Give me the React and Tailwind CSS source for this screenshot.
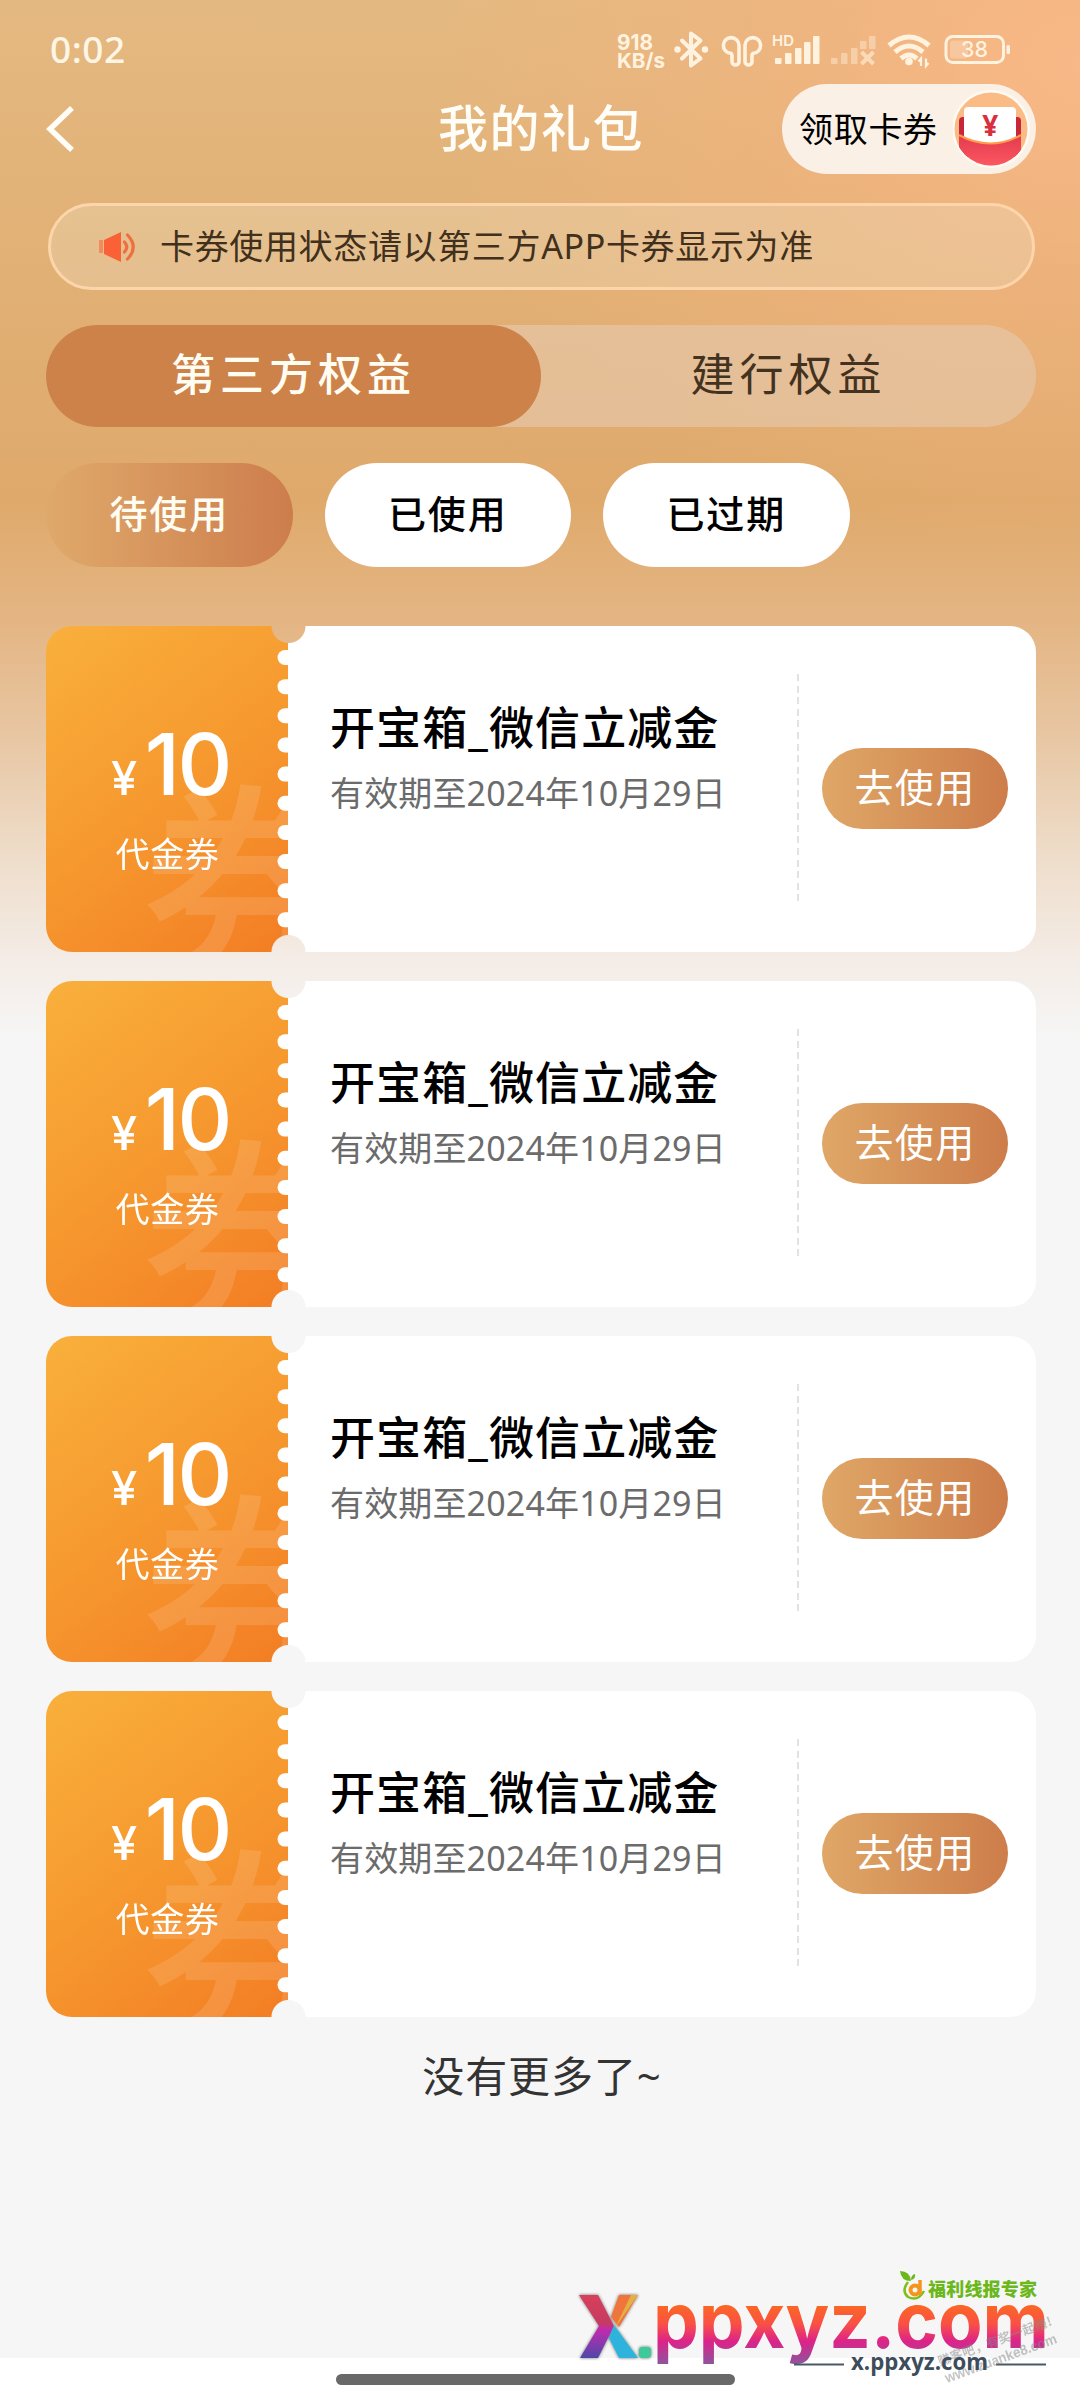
import React, { useState } from 'react'

const coupons = [
  { id: 1, amount: 10, type: '代金券', title: '开宝箱_微信立减金', expire: '有效期至2024年10月29日' },
  { id: 2, amount: 10, type: '代金券', title: '开宝箱_微信立减金', expire: '有效期至2024年10月29日' },
  { id: 3, amount: 10, type: '代金券', title: '开宝箱_微信立减金', expire: '有效期至2024年10月29日' },
  { id: 4, amount: 10, type: '代金券', title: '开宝箱_微信立减金', expire: '有效期至2024年10月29日' },
]

const tabs = ['第三方权益', '建行权益']
const filters = ['待使用', '已使用', '已过期']

const StatusBar = () => (
  <div className="h-[76px] pt-6 pl-[50px] pr-[69px] flex justify-between text-[#fff6e6]">
    <div className="text-[37px] leading-[50px] font-medium tracking-[0.5px]">0:02</div>
    <svg className="w-[395px] h-[52px] shrink-0" viewBox="616 24 395 52" fill="none">
      <g fill="#fff3e0" fontFamily="Inter" fontWeight="700">
        <text x="617" y="49.500" fontSize="22" textLength="36" lengthAdjust="spacingAndGlyphs">918</text>
        <text x="617" y="67.500" fontSize="20.500" textLength="48" lengthAdjust="spacingAndGlyphs">KB/s</text>
        <text x="772" y="46" fontSize="15" fontWeight="600" textLength="22" lengthAdjust="spacingAndGlyphs">HD</text>
      </g>
      {/* bluetooth */}
      <path d="M682 40.500l18.500 18-9.500 7V33.500l9.500 7-18.500 18" stroke="#fff3e0" strokeWidth="4" strokeLinejoin="round" strokeLinecap="round" />
      <circle cx="677.500" cy="49.500" r="3.200" fill="#fff3e0" />
      <circle cx="705" cy="49.500" r="3.200" fill="#fff3e0" />
      {/* earbuds */}
      <path d="M739 45a7.800 7.800 0 1 0-8.500 8.200q1.500 .3 1.500 2.800v5.500a3.500 3.500 0 0 0 7 0zM745 45a7.800 7.800 0 1 1 8.500 8.200q-1.500 .3-1.500 2.800v5.500a3.500 3.500 0 0 1-7 0z" stroke="#fff3e0" strokeWidth="3.600" />
      {/* signals */}
      <g fill="#fff3e0">
        <rect x="775" y="58" width="6.500" height="6" rx="1" />
        <rect x="785" y="53" width="6.500" height="11" rx="1" />
        <rect x="795" y="48" width="6.500" height="16" rx="1" />
        <rect x="804" y="42" width="6.500" height="22" rx="1" />
        <rect x="813" y="36" width="6.500" height="28" rx="1" />
      </g>
      <g fill="#fff3e0" opacity=".42">
        <rect x="831" y="58" width="6.500" height="6" rx="1" />
        <rect x="841" y="53" width="6.500" height="11" rx="1" />
        <rect x="851" y="48" width="6.500" height="16" rx="1" />
        <rect x="860" y="41" width="6.500" height="8" rx="1" />
        <rect x="869" y="36" width="6.500" height="13" rx="1" />
      </g>
      <path d="M861.500 52l12 12M873.500 52l-12 12" stroke="#fff3e0" strokeWidth="4" opacity=".6" />
      {/* wifi */}
      <g stroke="#fff3e0" strokeWidth="5">
        <path d="M889 45.500q20-17 40 0" />
        <path d="M895 52q14-12 28 0" />
        <path d="M901 58.500q8-7 16 0" />
      </g>
      <circle cx="909" cy="61.500" r="3.800" fill="#fff3e0" />
      <path d="M921 66v-7.500l-2.500 3M926 58.500v7.500l2.500-3" stroke="#fff3e0" strokeWidth="2.200" />
      {/* battery */}
      <rect x="946" y="36.500" width="57.500" height="26" rx="7" stroke="#fff3e0" strokeWidth="3" />
      <rect x="950" y="40.500" width="18" height="18" rx="3" fill="#fff3e0" opacity=".3" />
      <rect x="1006.500" y="45" width="3.500" height="9" rx="1.500" fill="#fff3e0" />
      <text x="961" y="57" fontSize="22" fontFamily="Inter" fontWeight="500" fill="#fff3e0" textLength="27" lengthAdjust="spacingAndGlyphs">38</text>
    </svg>
  </div>
)

const EnvelopeIcon = () => (
  <svg className="w-[78px] h-[78px]" viewBox="0 0 78 78">
    <defs>
      <clipPath id="envelope-clip"><circle cx="38" cy="39" r="36.500" /></clipPath>
      <linearGradient id="envelope-red" x1="0" y1="0" x2="0" y2="1">
        <stop offset="0" stopColor="#e23a4c" />
        <stop offset="1" stopColor="#ff5964" />
      </linearGradient>
    </defs>
    <circle cx="38" cy="39" r="39" fill="#fffaf2" />
    <g clipPath="url(#envelope-clip)">
      <rect width="78" height="78" fill="#fbbb84" />
      <rect x="6" y="27" width="62" height="40" rx="4" fill="#c8263a" />
      <rect x="11" y="17" width="52" height="40" rx="4" fill="#fff" />
      <path d="M6 45q31 17 62 0v33H6z" fill="url(#envelope-red)" />
      <path d="M6 45q31 17 62 0" stroke="#ff9b4b" strokeWidth="2" fill="none" />
    </g>
    <text x="37.500" y="46" fontSize="28" fontFamily="Noto Sans" fontWeight="700" fill="#d92f3e" textAnchor="middle">¥</text>
  </svg>
)

const Header = () => (
  <div className="h-[106px] pt-2 grid grid-cols-[1fr_auto_1fr] items-start">
    <svg className="w-[30px] h-[48px] mt-[21px] ml-[46px]" viewBox="0 0 30 48" fill="none">
      <path d="M26 3L4 24l22 21" stroke="#fffdf8" strokeWidth="5.500" />
    </svg>
    <div className="mt-[8px] pl-[2px] text-[50px] leading-[72px] font-medium tracking-[1.500px] text-[#fffdf8]">我的礼包</div>
    <div className="justify-self-end mr-11 w-[254px] h-[90px] rounded-full bg-[#faf0e6] pl-[17px] pr-[5px] flex items-center justify-between text-[34px] tracking-[0.700px] text-black">
      <span>领取卡券</span>
      <EnvelopeIcon />
    </div>
  </div>
)

const Notice = () => (
  <div className="mt-[21px] ml-[2px] mr-[1px] h-[87px] rounded-full border-[3px] border-[#fdd5ab] bg-[#ecd2b0]/45 flex items-center pl-[48px] text-[34px] tracking-[0.650px] text-[#40301c]">
    <svg className="w-[38px] h-8 mr-[23px]" viewBox="0 0 38 32" fill="none">
      <path d="M0 9h4v13H0z" fill="#f58a5a" />
      <path d="M5 9L22 1v30L5 23z" fill="#fb6136" />
      <path d="M25.500 11q4.500 5 0 10M28.500 4q11.500 12 0 24" stroke="#ee7040" strokeWidth="3.200" strokeLinecap="round" />
    </svg>
    卡券使用状态请以第三方APP卡券显示为准
  </div>
)

const Coupon = ({ coupon }) => (
  <div className="relative h-[326px] flex text-white [mask:radial-gradient(circle_17px_at_242.500px_0,transparent_16.500px,black_17.500px)_intersect,radial-gradient(circle_17px_at_242.500px_100%,transparent_16.500px,black_17.500px)]">
    <div className="relative w-[242px] shrink-0 overflow-hidden rounded-l-[26px] bg-linear-[143deg] from-[#f9b03c] via-[#f6992f] to-[#f37d24] flex flex-col items-center">
      <span className="absolute left-[95px] top-[151px] text-[210px] leading-[210px] font-medium text-white/12">券</span>
      <svg className="absolute right-0 top-0 w-[11px] h-[326px]" viewBox="0 0 11 326">
        {Array.from({ length: 10 }, (_, i) => (
          <rect key={i} x="0.500" y={24 + i * 29.150} width="20" height="15" rx="7.500" fill="#fff" />
        ))}
      </svg>
      <div className="relative mt-[85px] pl-[7px] h-[108px] flex items-baseline font-['Inter'] text-[85px] leading-[108px] font-medium tracking-[-2.500px]">
        <span className="text-[47px] mr-[10px]">¥</span>
        {coupon.amount}
      </div>
      <div className="relative mt-[10px] pl-[1px] text-[34px] leading-[50px] tracking-[0.700px]">{coupon.type}</div>
    </div>
    <div className="flex-1 rounded-r-[26px] bg-white flex">
      <div className="w-[509px] pt-[69px] pl-[42px] whitespace-nowrap">
        <div className="text-[45px] leading-[66px] font-medium tracking-[1.100px] text-black">{coupon.title}</div>
        <div className="mt-[7px] text-[34px] leading-[50px] tracking-[0.150px] text-[#6b6b6b]">{coupon.expire}</div>
      </div>
      <div className="mt-[48px] w-[2px] h-[228px] bg-[repeating-linear-gradient(to_bottom,#e2e2e2_0_7px,transparent_7px_11.600px)]" />
      <button className="mt-[122px] ml-[23px] w-[186px] h-[81px] rounded-full bg-linear-to-r from-[#dfa767] to-[#cd7d4a] pb-[3px] text-[39px] tracking-[1.300px]">
        去使用
      </button>
    </div>
  </div>
)

const SiteLogo = () => (
  <svg className="absolute left-[560px] top-[2255px] w-[520px] h-[145px]" viewBox="560 2255 520 145">
    <defs>
      <linearGradient id="logo-text" x1="0" y1="2303" x2="0" y2="2362" gradientUnits="userSpaceOnUse">
        <stop offset="0" stopColor="#fb6a20" />
        <stop offset=".35" stopColor="#fa5144" />
        <stop offset=".65" stopColor="#dc2389" />
        <stop offset="1" stopColor="#94509b" />
      </linearGradient>
      <linearGradient id="logo-left" x1="0" y1="2294" x2="0" y2="2359" gradientUnits="userSpaceOnUse">
        <stop offset="0" stopColor="#d8405a" />
        <stop offset=".45" stopColor="#c63a62" />
        <stop offset=".55" stopColor="#c02bb0" />
        <stop offset="1" stopColor="#4a48a8" />
      </linearGradient>
      <filter id="logo-shadow" x="-20%" y="-20%" width="140%" height="140%">
        <feDropShadow dx="0" dy="0" stdDeviation="1.500" floodColor="#222" floodOpacity=".7" />
      </filter>
    </defs>
    <g filter="url(#logo-shadow)">
      <path d="M579 2295h19l16 31-16 32h-18l19-32z" fill="url(#logo-left)" />
      <path d="M619 2295h19l-19 32-8-10z" fill="#f0743c" />
      <path d="M631 2295h7l-23 33z" fill="#e3b044" />
      <path d="M614 2325l24 33h-19l-10-20z" fill="#2fb4dc" />
      <rect x="639" y="2347" width="12" height="11" rx="3" fill="#3dc99a" />
    </g>
    <text x="653" y="2348" fontFamily="Inter" fontWeight="700" fontSize="77" textLength="396" lengthAdjust="spacingAndGlyphs" fill="url(#logo-text)">ppxyz.com</text>
    <path d="M794 2364.500h50M996 2364.500h50" stroke="#4a5966" strokeWidth="2" />
    <g fill="#8a8a8a" opacity=".5" fontWeight="700">
      <text transform="rotate(-20 940 2366)" x="940" y="2366" fontSize="12.500" fontFamily="Noto Sans CJK SC" textLength="120">赚客吧，有奖一起赚!</text>
      <text transform="rotate(-20 947 2383)" x="947" y="2383" fontSize="14.500" fontFamily="Liberation Sans" textLength="118" lengthAdjust="spacingAndGlyphs">www.zuanke8.com</text>
    </g>
    <text x="851" y="2370" fontFamily="Open Sans" fontWeight="700" fontSize="23" textLength="137" lengthAdjust="spacingAndGlyphs" fill="#3d4d5c">x.ppxyz.com</text>
    <path d="M900 2271q10 0 11 10-10 0-11-10zM911 2280q0-5 4-6 1 5-4 6z" fill="#6cb71b" />
    <path d="M908 2282q-7 9 0 15 10 5 16-6" stroke="#7cc01f" strokeWidth="2.500" fill="none" />
    <circle cx="915" cy="2290" r="4.500" stroke="#f5951c" strokeWidth="4" fill="none" />
    <path d="M920 2280v15" stroke="#f5951c" strokeWidth="3.500" />
    <text x="928" y="2295.500" fontFamily="Noto Sans CJK SC" fontWeight="900" fontSize="18" textLength="109" fill="#6cb71b">福利线报专家</text>
  </svg>
)

const App = () => {
  const [tab, setTab] = useState(0)
  const [filter, setFilter] = useState(0)

  return (
    <div className="relative w-[1080px] h-[2400px] overflow-hidden flex flex-col bg-[#f6f6f6] font-['Noto_Sans','Noto_Sans_CJK_SC',sans-serif]">
      <div className="absolute inset-x-0 top-0 h-[1040px] bg-[radial-gradient(ellipse_640px_500px_at_100%_6%,#f9b887_0%,#f4b37f99_45%,transparent_100%),linear-gradient(to_bottom,#e4b981_0,#dfa96b_500px,#e4b583_620px,#e8c7a4_740px,#eedcc8_850px,#f4ece6_960px,#f6f6f6_1040px)]" />
      <div className="relative flex-1 flex flex-col">
        <StatusBar />
        <Header />
        <div className="pl-[46px] pr-11 flex flex-col">
          <Notice />
          <div className="mt-[35px] h-[102px] rounded-full bg-[#e6c6a6]/70 flex text-[44px] tracking-[5px] text-[#42321f]">
            {tabs.map((name, i) => (
              <button
                key={name}
                onClick={() => setTab(i)}
                className={'flex-1 pb-1 ' + (i === tab ? 'rounded-full bg-[#cd824a] font-medium text-[#fffdf2]' : '')}
              >
                {name}
              </button>
            ))}
          </div>
          <div className="mt-9 flex gap-8">
            {filters.map((name, i) => (
              <button
                key={name}
                onClick={() => setFilter(i)}
                className={
                  'w-[246.500px] h-[104px] pb-1 rounded-full text-[38px] font-medium tracking-[1.800px] ' +
                  (i === filter ? 'bg-linear-to-r from-[#dfa96b] to-[#cd7d4c] text-[#fffdf2]' : 'bg-white text-black')
                }
              >
                {name}
              </button>
            ))}
          </div>
          <div className="mt-[59px] flex flex-col gap-[29px]">
            {coupons.map((coupon) => (
              <Coupon key={coupon.id} coupon={coupon} />
            ))}
          </div>
          <div className="mt-[29px] pl-[2px] text-center text-[42px] leading-[60px] tracking-[0.900px] text-[#333]">没有更多了~</div>
        </div>
      </div>
      <div className="relative h-[42px] bg-white pt-4 pl-[336px]">
        <div className="w-[399px] h-[11px] rounded-full bg-[#696969]" />
      </div>
      <SiteLogo />
    </div>
  )
}

export default App
